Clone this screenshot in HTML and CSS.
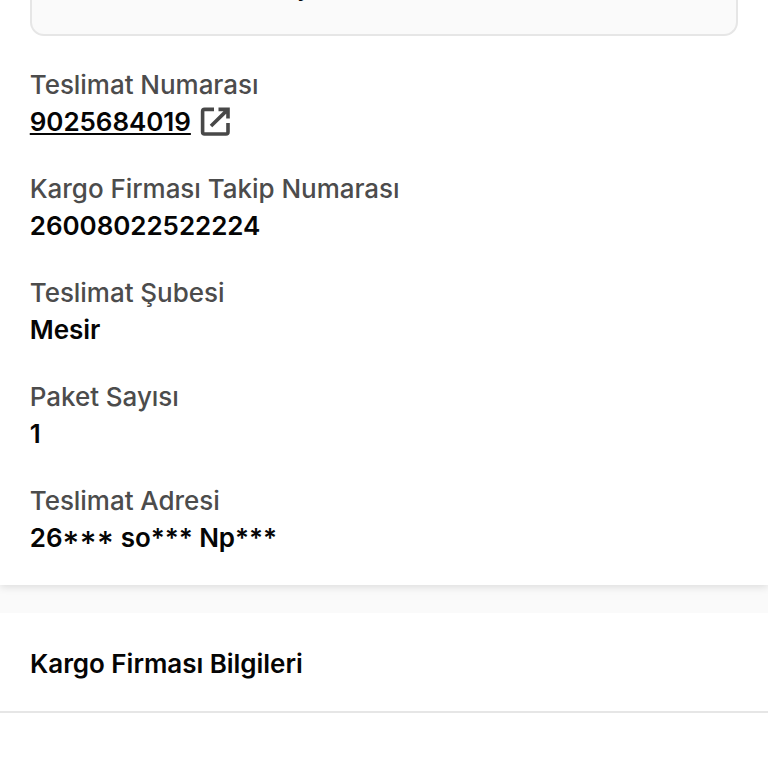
FILE: index.html
```
<!DOCTYPE html>
<html lang="tr">

<head>
    <meta charset="UTF-8">
    <meta name="viewport" content="width=device-width, initial-scale=1.0">
    <title>Kargo Takip</title>
    <link rel="stylesheet" href="styles.css">
</head>

<body>

    <section class="card delivery">
        <div class="status-box">
            <span class="status-text">y</span>
        </div>

        <dl class="info-list">
            <div class="info-item">
                <dt>Teslimat Numarası</dt>
                <dd>
                    <a class="tracking-link" href="#">9025684019</a>
                    <svg class="open-icon" viewBox="0 0 30 30" aria-hidden="true">
                        <path d="M14 2.4H4.6Q2.6 2.4 2.6 4.4V25Q2.6 27 4.6 27H26Q28 27 28 25V16" />
                        <path d="M18.5 2.4H28V11.5M28 2.4L11 19" />
                    </svg>
                </dd>
            </div>
            <div class="info-item">
                <dt>Kargo Firması Takip Numarası</dt>
                <dd>26008022522224</dd>
            </div>
            <div class="info-item">
                <dt>Teslimat Şubesi</dt>
                <dd>Mesir</dd>
            </div>
            <div class="info-item">
                <dt>Paket Sayısı</dt>
                <dd>1</dd>
            </div>
            <div class="info-item">
                <dt>Teslimat Adresi</dt>
                <dd class="address">26<span class="mask">***</span> so*** Np***</dd>
            </div>
        </dl>
    </section>

    <section class="card company">
        <h2 class="card-title">Kargo Firması Bilgileri</h2>
    </section>

</body>

</html>
```

FILE: styles.css
```
* {
    box-sizing: border-box;
    margin: 0;
    padding: 0;
}

body {
    height: 768px;
    overflow: hidden;
    background-color: #fafafa;
    color: #050505;
    font-family: Inter, "Liberation Sans", sans-serif;
    font-size: 26px;
    line-height: 37px;
}

.card {
    background-color: #fff;
}

.delivery {
    height: 585px;
    padding: 0 30px;
    box-shadow: 0 2px 8px rgba(0, 0, 0, 0.12);
}

.status-box {
    height: 36px;
    border: 2px solid #e6e6e6;
    border-top: none;
    border-radius: 0 0 14px 14px;
    background-color: #fafafa;
    overflow: hidden;
}

/* only the descender shows below the top edge */
.status-text {
    display: block;
    margin: -32px 0 0 265px;
}

.info-list {
    display: flex;
    flex-direction: column;
    gap: 30px;
    padding-top: 30px;
}

.info-item dt {
    margin-left: -0.25px;
    color: #4c4c4c;
    font-weight: 500;
    letter-spacing: -0.04px;
}

.info-item dd {
    display: flex;
    align-items: center;
    gap: 9px;
    height: 37px;
    margin-left: -0.25px;
    font-weight: 600;
    letter-spacing: -0.06px;
}

.info-item .address {
    display: block;
}

/* asterisks after digits sit lower and wider */
.mask {
    font-size: 32px;
    font-weight: 500;
    letter-spacing: 0.6px;
    line-height: 1;
    vertical-align: -8px;
}

.tracking-link {
    color: inherit;
}

.open-icon {
    width: 30px;
    height: 30px;
    fill: none;
    stroke: #484848;
    stroke-width: 3.6;
}

.company {
    height: 155px;
    margin-top: 28px;
}

.card-title {
    height: 100px;
    padding: 0 30px;
    border-bottom: 2px solid #e6e6e6;
    font-size: 26px;
    font-weight: 600;
    line-height: 101px;
    letter-spacing: -0.04px;
}
```
